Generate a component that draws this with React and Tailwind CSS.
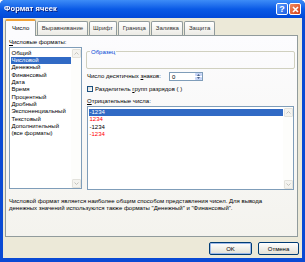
import React from 'react';

const formats = [
  'Общий',
  'Числовой',
  'Денежный',
  'Финансовый',
  'Дата',
  'Время',
  'Процентный',
  'Дробный',
  'Экспоненциальный',
  'Текстовый',
  'Дополнительный',
  '(все форматы)',
];

const negatives = [
  { text: '-1234', red: false },
  { text: '1234', red: true },
  { text: '-1234', red: false },
  { text: '-1234', red: true },
];

const tabs = ['Число', 'Выравнивание', 'Шрифт', 'Граница', 'Заливка', 'Защита'];

function ArrowBox({ down }) {
  return (
    <div className="w-[9px] h-[9px] border border-[#e3e2dc] bg-[#f4f3ef] rounded-[1px] flex items-center justify-center">
      <svg width="5" height="3" viewBox="0 0 5 3">
        <path d={down ? 'M0.5 0.5 L2.5 2.5 L4.5 0.5' : 'M0.5 2.5 L2.5 0.5 L4.5 2.5'} fill="none" stroke="#c3c2bd" strokeWidth="1" />
      </svg>
    </div>
  );
}

function Scrollbar() {
  return (
    <div className="w-[10px] flex flex-col justify-between p-[0.5px] bg-[#fdfdfb]">
      <ArrowBox />
      <ArrowBox down />
    </div>
  );
}

export default function App() {
  return (
    <div className="w-[305px] h-[262px] bg-white font-['Liberation_Sans',Arial,sans-serif] text-[6px] text-black">
      <div className="w-[305px] h-[262px] rounded-t-[5px] bg-[#0a4ad4] flex flex-col">
        {/* title bar */}
        <div className="h-[18px] rounded-t-[5px] bg-gradient-to-b from-[#3d8cf7] via-[#0a5ae6] to-[#0249d8] flex items-center justify-between pl-[4px] pr-[4px]">
          <span className="text-white font-bold text-[7.5px] tracking-[0.1px] drop-shadow-[1px_1px_0_#0a1e7a]">Формат ячеек</span>
          <div className="flex gap-[1px]">
            <div className="w-[12px] h-[12px] rounded-[2px] border border-white bg-gradient-to-br from-[#5d9bff] to-[#1d5fe0] flex items-center justify-center text-white font-bold text-[9px] leading-none">?</div>
            <div className="w-[12px] h-[12px] rounded-[2px] border border-white bg-gradient-to-br from-[#f08a5e] to-[#d43b14] flex items-center justify-center">
              <svg width="7" height="7" viewBox="0 0 7 7">
                <path d="M1 1 L6 6 M6 1 L1 6" stroke="white" strokeWidth="1.6" />
              </svg>
            </div>
          </div>
        </div>

        {/* body */}
        <div className="flex-1 mx-[3px] mb-[4px] bg-[#ece9d8] flex flex-col">
          {/* tabs */}
          <div className="flex items-end h-[17px] pl-[2px]">
            {tabs.map((t, i) =>
              i === 0 ? (
                <div key={t} className="h-[17px] px-[5px] -mb-[1px] z-10 border-x border-[#919b9c] border-t-2 border-t-[#f0a23a] bg-[#fcfcfe] rounded-t-[2px] flex items-center">
                  <span className="px-[1px]">{t}</span>
                </div>
              ) : (
                <div key={t} className="h-[14px] px-[3.5px] ml-[1px] border-x border-t border-[#919b9c] bg-gradient-to-b from-white to-[#ecebe5] rounded-t-[2px] flex items-center text-[#333]">
                  {t}
                </div>
              )
            )}
          </div>

          {/* panel */}
          <div className="ml-[2px] w-[293px] h-[202px] border border-[#919b9c] bg-gradient-to-b from-[#fcfcfe] to-[#f4f3ee] flex flex-col">
            <div className="flex pl-[3px] pt-[2px]">
              {/* left column */}
              <div className="w-[73px] flex flex-col">
                <div className="h-[8px] leading-[8px]">
                  <span className="underline decoration-[0.5px]">Ч</span>исловые форматы:
                </div>
                <div className="mt-[1px] h-[142px] border border-[#7f9db9] bg-white flex">
                  <div className="flex-1 pt-[1.5px] pl-[0.5px]">
                    {formats.map((f, i) => (
                      <div key={f} className={`h-[7.35px] leading-[7.35px] pl-[1px] ${i === 1 ? 'bg-[#316ac5] text-white' : ''}`}>
                        {f}
                      </div>
                    ))}
                  </div>
                  <Scrollbar />
                </div>
              </div>

              {/* right column */}
              <div className="ml-[4px] w-[209px] flex flex-col">
                <div className="mt-[13px] h-[18px] border border-[#d0d0bf] rounded-[2px] relative">
                  <span className="absolute -top-[4.5px] left-[3px] px-[1px] bg-[#fbfbfc] text-[#0046d5] leading-[8px]">Образец</span>
                </div>
                <div className="mt-[3px] h-[9px] flex items-center pl-[1px]">
                  <span className="w-[82px]">
                    Число десятичных <span className="underline decoration-[0.5px]">з</span>наков:
                  </span>
                  <div className="w-[34px] h-[9px] border border-[#7f9db9] bg-white flex items-center">
                    <span className="flex-1 pl-[2px] leading-none">0</span>
                    <div className="w-[7px] h-[7px] flex flex-col gap-[0.5px] mr-[0.5px]">
                      <div className="flex-1 bg-[#c6d5f7] rounded-[1px] flex items-center justify-center">
                        <svg width="3" height="2" viewBox="0 0 3 2"><path d="M0 2 L1.5 0 L3 2Z" fill="#4d6185" /></svg>
                      </div>
                      <div className="flex-1 bg-[#c6d5f7] rounded-[1px] flex items-center justify-center">
                        <svg width="3" height="2" viewBox="0 0 3 2"><path d="M0 0 L1.5 2 L3 0Z" fill="#4d6185" /></svg>
                      </div>
                    </div>
                  </div>
                </div>
                <div className="mt-[4px] h-[8px] flex items-center pl-[1px] gap-[2px]">
                  <div className="w-[6px] h-[6px] border border-[#1c5180] bg-gradient-to-br from-[#dcdcd7] to-white"></div>
                  <span>
                    Разделитель <span className="underline decoration-[0.5px]">г</span>рупп разрядов ( )
                  </span>
                </div>
                <div className="mt-[4px] h-[8px] leading-[8px] pl-[1px]">
                  <span className="underline decoration-[0.5px]">О</span>трицательные числа:
                </div>
                <div className="mt-[1px] ml-[1px] w-[207px] h-[84px] border border-[#7f9db9] bg-white flex">
                  <div className="flex-1 pt-[2px] pl-[0.5px]">
                    {negatives.map((n, i) => (
                      <div
                        key={i}
                        className={`h-[7.3px] leading-[7.3px] pl-[1px] ${i === 0 ? 'bg-[#316ac5] text-white' : n.red ? 'text-[#ff0000]' : ''}`}
                      >
                        {n.text}
                      </div>
                    ))}
                  </div>
                  <Scrollbar />
                </div>
              </div>
            </div>

            <div className="mt-[8px] pl-[3px] leading-[7px]">
              <div>Числовой формат является наиболее общим способом представления чисел. Для вывода</div>
              <div>денежных значений используются также форматы "Денежный" и "Финансовый".</div>
            </div>
          </div>

          {/* buttons */}
          <div className="flex justify-end gap-[6px] pr-[3px] mt-[5px]">
            <button className="w-[43px] h-[13px] rounded-[2px] border border-[#003c74] bg-gradient-to-b from-white to-[#e3e0d6] shadow-[inset_0_0_0_1px_#9db8e8] text-[6px] leading-none">
              OK
            </button>
            <button className="w-[41px] h-[13px] rounded-[2px] border border-[#003c74] bg-gradient-to-b from-white to-[#e3e0d6] text-[6px] leading-none">
              Отмена
            </button>
          </div>
        </div>
      </div>
    </div>
  );
}
